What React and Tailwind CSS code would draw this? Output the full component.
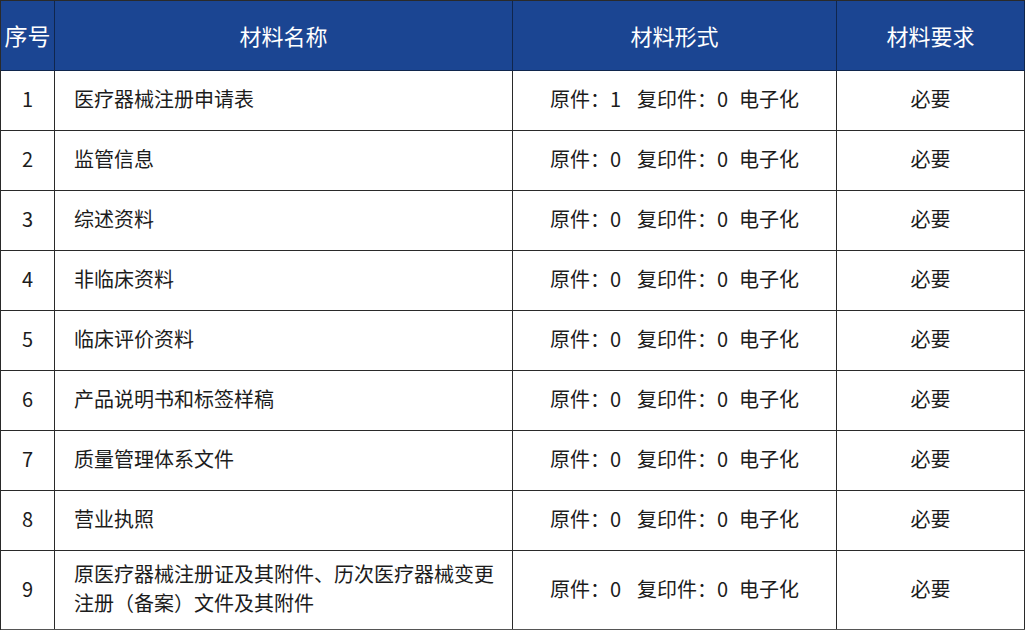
export default function App() {
  const rows = [
    ["1", "医疗器械注册申请表", "1"],
    ["2", "监管信息", "0"],
    ["3", "综述资料", "0"],
    ["4", "非临床资料", "0"],
    ["5", "临床评价资料", "0"],
    ["6", "产品说明书和标签样稿", "0"],
    ["7", "质量管理体系文件", "0"],
    ["8", "营业执照", "0"],
  ];
  const font = { fontFamily: '"Noto Sans CJK SC", "Noto Sans", sans-serif' };
  const Form = ({ n }) => (
    <span className="inline-flex items-center whitespace-nowrap">
      <span>原件：</span>
      <span>{n}</span>
      <span className="ml-[16px]">复印件：</span>
      <span>0</span>
      <span className="ml-[11px]">电子化</span>
    </span>
  );
  return (
    <div className="w-[1026px] h-[630px] bg-white" style={font}>
      <div className="w-[1025px] border-l border-t border-[#2a2a2a] text-[#1c1c1c]">
        <div className="grid grid-cols-[54px_458px_324px_188px] h-[70px] bg-[#1b4592] text-white text-[22px] border-b border-[#10264d]">
          <div className="flex items-center justify-center border-r border-[#10264d] text-[23px]">序号</div>
          <div className="flex items-center justify-center border-r border-[#10264d]">材料名称</div>
          <div className="flex items-center justify-center border-r border-[#10264d]">材料形式</div>
          <div className="flex items-center justify-center border-r border-[#10264d]">材料要求</div>
        </div>
        {rows.map(([i, name, n]) => (
          <div key={i} className="grid grid-cols-[54px_458px_324px_188px] h-[60px] text-[20px] border-b border-[#2a2a2a]">
            <div className="flex items-center justify-center border-r border-[#2a2a2a] pb-[3px]">{i}</div>
            <div className="flex items-center pl-[19px] border-r border-[#2a2a2a] pb-[3px]">{name}</div>
            <div className="flex items-center justify-center border-r border-[#2a2a2a] pb-[3px]"><Form n={n} /></div>
            <div className="flex items-center justify-center border-r border-[#2a2a2a] pb-[3px]">必要</div>
          </div>
        ))}
        <div className="grid grid-cols-[54px_458px_324px_188px] h-[79px] text-[20px] border-b border-[#555]">
          <div className="flex items-center justify-center border-r border-[#2a2a2a] pb-[3px]">9</div>
          <div className="flex items-center pl-[19px] pr-1 border-r border-[#2a2a2a] leading-[29px] pb-[5px]">
            <span className="whitespace-nowrap">原医疗器械注册证及其附件、历次医疗器械变更<br />注册（备案）文件及其附件</span>
          </div>
          <div className="flex items-center justify-center border-r border-[#2a2a2a] pb-[3px]"><Form n="0" /></div>
          <div className="flex items-center justify-center border-r border-[#2a2a2a] pb-[3px]">必要</div>
        </div>
      </div>
    </div>
  );
}
